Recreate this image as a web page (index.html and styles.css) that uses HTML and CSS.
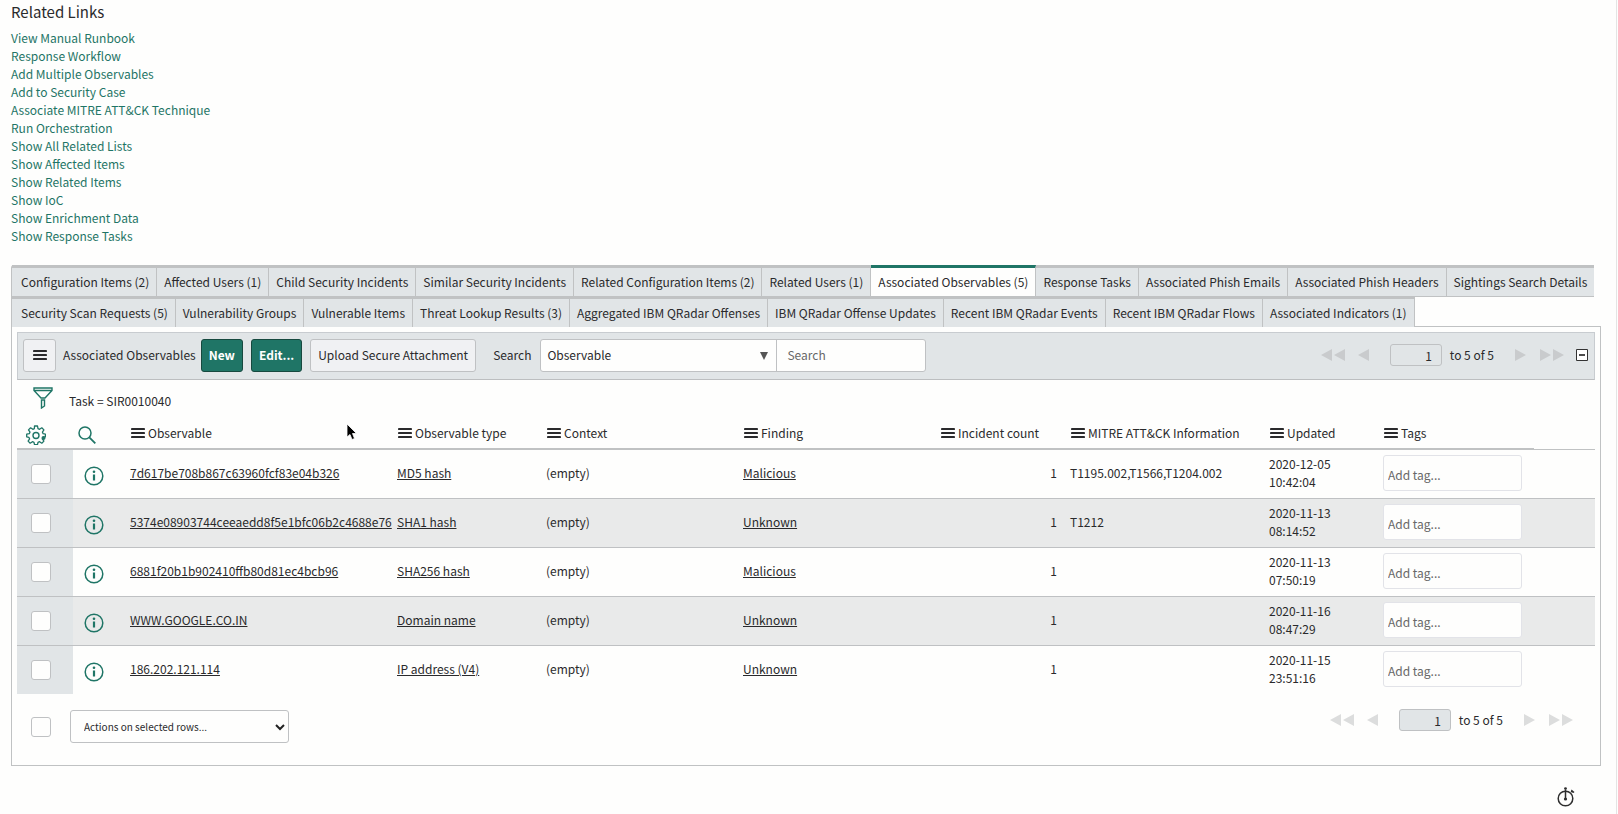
FILE: index.html
```html
<!DOCTYPE html>
<html lang="en">
<head>
<meta charset="utf-8">
<title>Security Incident</title>
<link rel="stylesheet" href="styles.css">
</head>

<body>
<svg class="defs" aria-hidden="true">
	<symbol id="menu" viewBox="0 0 14 12"><path d="M1 2h12M1 6h12M1 10h12" fill="none" stroke="currentColor" stroke-width="2.200" stroke-linecap="round"/></symbol>
	<symbol id="info" viewBox="0 0 20 20"><circle cx="10" cy="10" r="8.8" fill="none" stroke="currentColor" stroke-width="1.5"/><path d="M10 8.500v6" stroke="currentColor" stroke-width="2.200"/><circle cx="10" cy="5.800" r="1.300" fill="currentColor"/></symbol>
	<symbol id="first" viewBox="0 0 24 12"><path d="M11 0v12L0 6zM24 0v12L13 6z" fill="currentColor"/></symbol>
	<symbol id="prev" viewBox="0 0 12 12"><path d="M11 0v12L0 6z" fill="currentColor"/></symbol>
	<symbol id="next" viewBox="0 0 12 12"><path d="M0 0v12L11 6z" fill="currentColor"/></symbol>
	<symbol id="last" viewBox="0 0 24 12"><path d="M0 0v12l11-6zM13 0v12l11-6z" fill="currentColor"/></symbol>
</svg>

<div class="page">
	<h2>Related Links</h2>
	<ul class="links">
		<li><a href="#">View Manual Runbook</a></li>
		<li><a href="#">Response Workflow</a></li>
		<li><a href="#">Add Multiple Observables</a></li>
		<li><a href="#">Add to Security Case</a></li>
		<li><a href="#">Associate MITRE ATT&amp;CK Technique</a></li>
		<li><a href="#">Run Orchestration</a></li>
		<li><a href="#">Show All Related Lists</a></li>
		<li><a href="#">Show Affected Items</a></li>
		<li><a href="#">Show Related Items</a></li>
		<li><a href="#">Show IoC</a></li>
		<li><a href="#">Show Enrichment Data</a></li>
		<li><a href="#">Show Response Tasks</a></li>
	</ul>

	<div class="tabs">
		<div class="tab-row upper">
			<button class="tab">Configuration Items (2)</button>
			<button class="tab">Affected Users (1)</button>
			<button class="tab">Child Security Incidents</button>
			<button class="tab">Similar Security Incidents</button>
			<button class="tab">Related Configuration Items (2)</button>
			<button class="tab">Related Users (1)</button>
			<button class="tab active">Associated Observables (5)</button>
			<button class="tab">Response Tasks</button>
			<button class="tab">Associated Phish Emails</button>
			<button class="tab">Associated Phish Headers</button>
			<button class="tab">Sightings Search Details</button>
		</div>
		<div class="tab-row">
			<button class="tab">Security Scan Requests (5)</button>
			<button class="tab">Vulnerability Groups</button>
			<button class="tab">Vulnerable Items</button>
			<button class="tab">Threat Lookup Results (3)</button>
			<button class="tab">Aggregated IBM QRadar Offenses</button>
			<button class="tab">IBM QRadar Offense Updates</button>
			<button class="tab">Recent IBM QRadar Events</button>
			<button class="tab">Recent IBM QRadar Flows</button>
			<button class="tab">Associated Indicators (1)</button>
		</div>
	</div>

	<div class="panel">
		<div class="toolbar">
			<button class="btn square" aria-label="List menu"><svg class="bars"><use href="#menu"/></svg></button>
			<span class="list-title">Associated Observables</span>
			<button class="btn primary">New</button>
			<button class="btn primary">Edit...</button>
			<button class="btn">Upload Secure Attachment</button>
			<label class="search-label" for="searchField">Search</label>
			<div class="search-group">
				<div class="select-wrap">
					<select id="searchField"><option>Observable</option></select>
					<svg class="caret" viewBox="0 0 8 8"><path d="M0 0h8L4 8z" fill="#555"/></svg>
				</div>
				<input id="searchText" type="text" placeholder="Search" aria-label="Search text">
			</div>
			<div class="pager">
				<button aria-label="First page"><svg class="double"><use href="#first"/></svg></button>
				<button aria-label="Previous page"><svg class="single"><use href="#prev"/></svg></button>
				<input type="text" value="1" aria-label="Row">
				<span>to 5 of 5</span>
				<button aria-label="Next page"><svg class="single"><use href="#next"/></svg></button>
				<button aria-label="Last page"><svg class="double"><use href="#last"/></svg></button>
			</div>
			<button class="collapse" aria-label="Collapse list"><svg viewBox="0 0 12 12"><path d="M.5.5h11v11H.5z" fill="#fff" stroke="#333"/><path d="M3 6h6" stroke="#111" stroke-width="1.5"/></svg></button>
		</div>

		<div class="filter">
			<button class="icon" aria-label="Filter"><svg class="funnel" viewBox="0 0 20 22"><path d="M1 1h18v2.500l-7 7.500H8L1 3.500zM1 3.500h18M8.500 13h3v6l-3 2z" fill="none" stroke="currentColor" stroke-width="1.400"/></svg></button>
			<a class="crumb" href="#">Task = SIR0010040</a>
		</div>

		<table>
			<colgroup>
				<col class="c-check"><col class="c-info"><col class="c-obs"><col class="c-type"><col class="c-context"><col class="c-finding"><col class="c-count"><col class="c-mitre"><col class="c-updated"><col class="c-tags"><col>
			</colgroup>
			<thead>
				<tr>
					<th class="gear-cell"><button class="icon" aria-label="Personalize list"><svg class="gear" viewBox="0 0 20 20"><path d="M8.500 1h3l.5 2.600 1.600.7 2.200-1.500 2.100 2.100-1.500 2.200.7 1.600 2.300.5v2.600l-2.300.5-.7 1.600 1.500 2.200-2.100 2.100-2.200-1.500-1.600.7-.5 2.300h-3l-.5-2.300-1.600-.7-2.200 1.500-2.100-2.100 1.500-2.200-.7-1.600L.7 11.800V9.200l2.600-.5.7-1.600-1.500-2.200 2.100-2.100 2.200 1.500 1.600-.7z" fill="none" stroke="currentColor" stroke-width="1.300" stroke-linejoin="round"/><circle cx="10" cy="10.500" r="3" fill="none" stroke="currentColor" stroke-width="1.400"/><circle cx="17.500" cy="13" r="2" fill="currentColor"/></svg></button></th>
					<th class="find-cell"><button class="icon" aria-label="Search columns"><svg class="find" viewBox="0 0 18 18"><circle cx="7" cy="7" r="6" fill="none" stroke="currentColor" stroke-width="1.500"/><path d="M11.300 11.300l6 6" stroke="currentColor" stroke-width="1.800"/></svg></button></th>
					<th><svg class="bars"><use href="#menu"/></svg>Observable</th>
					<th><svg class="bars"><use href="#menu"/></svg>Observable type</th>
					<th><svg class="bars"><use href="#menu"/></svg>Context</th>
					<th><svg class="bars"><use href="#menu"/></svg>Finding</th>
					<th><svg class="bars"><use href="#menu"/></svg>Incident count</th>
					<th><svg class="bars"><use href="#menu"/></svg>MITRE ATT&amp;CK Information</th>
					<th><svg class="bars"><use href="#menu"/></svg>Updated</th>
					<th><svg class="bars"><use href="#menu"/></svg>Tags</th>
					<th class="spare"></th>
				</tr>
			</thead>
			<tbody>
				<tr>
					<td class="check"><input type="checkbox" aria-label="Select row 1"></td>
					<td class="details"><button class="icon" aria-label="Preview row 1"><svg><use href="#info"/></svg></button></td>
					<td><a href="#">7d617be708b867c63960fcf83e04b326</a></td>
					<td><a href="#">MD5 hash</a></td>
					<td>(empty)</td>
					<td><a href="#">Malicious</a></td>
					<td class="num">1</td>
					<td>T1195.002,T1566,T1204.002</td>
					<td class="date">2020-12-05 10:42:04</td>
					<td><input class="tag" type="text" placeholder="Add tag..." aria-label="Tags for row 1"></td>
					<td></td>
				</tr>
				<tr>
					<td class="check"><input type="checkbox" aria-label="Select row 2"></td>
					<td class="details"><button class="icon" aria-label="Preview row 2"><svg><use href="#info"/></svg></button></td>
					<td><a href="#">5374e08903744ceeaedd8f5e1bfc06b2c4688e76</a></td>
					<td><a href="#">SHA1 hash</a></td>
					<td>(empty)</td>
					<td><a href="#">Unknown</a></td>
					<td class="num">1</td>
					<td>T1212</td>
					<td class="date">2020-11-13 08:14:52</td>
					<td><input class="tag" type="text" placeholder="Add tag..." aria-label="Tags for row 2"></td>
					<td></td>
				</tr>
				<tr>
					<td class="check"><input type="checkbox" aria-label="Select row 3"></td>
					<td class="details"><button class="icon" aria-label="Preview row 3"><svg><use href="#info"/></svg></button></td>
					<td><a href="#">6881f20b1b902410ffb80d81ec4bcb96</a></td>
					<td><a href="#">SHA256 hash</a></td>
					<td>(empty)</td>
					<td><a href="#">Malicious</a></td>
					<td class="num">1</td>
					<td></td>
					<td class="date">2020-11-13 07:50:19</td>
					<td><input class="tag" type="text" placeholder="Add tag..." aria-label="Tags for row 3"></td>
					<td></td>
				</tr>
				<tr>
					<td class="check"><input type="checkbox" aria-label="Select row 4"></td>
					<td class="details"><button class="icon" aria-label="Preview row 4"><svg><use href="#info"/></svg></button></td>
					<td><a href="#">WWW.GOOGLE.CO.IN</a></td>
					<td><a href="#">Domain name</a></td>
					<td>(empty)</td>
					<td><a href="#">Unknown</a></td>
					<td class="num">1</td>
					<td></td>
					<td class="date">2020-11-16 08:47:29</td>
					<td><input class="tag" type="text" placeholder="Add tag..." aria-label="Tags for row 4"></td>
					<td></td>
				</tr>
				<tr>
					<td class="check"><input type="checkbox" aria-label="Select row 5"></td>
					<td class="details"><button class="icon" aria-label="Preview row 5"><svg><use href="#info"/></svg></button></td>
					<td><a href="#">186.202.121.114</a></td>
					<td><a href="#">IP address (V4)</a></td>
					<td>(empty)</td>
					<td><a href="#">Unknown</a></td>
					<td class="num">1</td>
					<td></td>
					<td class="date">2020-11-15 23:51:16</td>
					<td><input class="tag" type="text" placeholder="Add tag..." aria-label="Tags for row 5"></td>
					<td></td>
				</tr>
			</tbody>
		</table>

		<div class="list-footer">
			<input type="checkbox" aria-label="Select all rows">
			<div class="select-wrap actions">
				<select aria-label="Actions on selected rows"><option>Actions on selected rows...</option></select>
				<svg class="caret" viewBox="0 0 10 6"><path d="M1 1l4 4 4-4" fill="none" stroke="#222" stroke-width="2"/></svg>
			</div>
			<div class="pager">
				<button aria-label="First page"><svg class="double"><use href="#first"/></svg></button>
				<button aria-label="Previous page"><svg class="single"><use href="#prev"/></svg></button>
				<input type="text" value="1" aria-label="Row">
				<span>to 5 of 5</span>
				<button aria-label="Next page"><svg class="single"><use href="#next"/></svg></button>
				<button aria-label="Last page"><svg class="double"><use href="#last"/></svg></button>
			</div>
		</div>
	</div>

	<div class="timing">
		<button class="icon" aria-label="Response time"><svg viewBox="0 0 18 20"><circle cx="8.500" cy="11.500" r="7.300" fill="none" stroke="currentColor" stroke-width="1.500"/><path d="M8.500 3v10" stroke="currentColor" stroke-width="1.500"/><circle cx="8.500" cy="1.600" r="1.400" fill="currentColor"/><circle cx="8.500" cy="12" r="1.600" fill="currentColor"/><path d="M14.500 2.500l3 2.500-1 1-2.800-1z" fill="currentColor"/></svg></button>
	</div>
</div>

<svg class="pointer" viewBox="0 0 12 18"><path d="M1 1v13l3-2.500 2 5 2.500-1-2-5h4z" fill="#000" stroke="#fff" stroke-width=".8"/></svg>
</body>
</html>
```
FILE: styles.css
```css
* {
	box-sizing:border-box;
}

body {
	margin:0;
	background:#fefefd;
	color:#2a2a2c;
	font-family:"Noto Sans CJK SC", "Noto Sans", sans-serif;
	font-size:12px;
	line-height:18px;
}

button, input, select {
	font:inherit;
	color:inherit;
	margin:0;
}

button {
	background:none;
	border:0;
	padding:0;
}

svg {
	display:block;
}

.defs {
	display:none;
}

.page {
	min-height:100vh;
	margin-right:1px;
	padding:0 15px 0 11px;
	border-right:1px solid #e4e4e4;
}

h2 {
	margin:0;
	font-size:15px;
	line-height:24px;
	font-weight:normal;
}

.links {
	list-style:none;
	margin:0;
	padding:5px 0 20px;
}

.links a {
	color:#1f7566;
	text-decoration:none;
}

/* tabs */

.tabs {
	position:relative;
	margin-bottom:-1px;
}

.tab-row {
	display:flex;
	width:max-content;
	border-left:1px solid #c0c2c3;
}

.upper {
	margin-bottom:-1px;
	border-bottom:1px solid #c0c2c3;
	border-top-left-radius:3px;
}

.tab {
	height:31px;
	padding:0 7px;
	background:#e1e5e7;
	border-top:3px solid #c0c2c3;
	border-right:1px solid #c0c2c3;
	white-space:nowrap;
}

.tab:first-child {
	padding-left:9px;
}

.upper .tab:last-child {
	border-right:0;
}

.tab.active {
	background:#fefefd;
	border-top-color:#1f7566;
}

/* list */

.panel {
	border:1px solid #c0c2c3;
	padding:5px;
}

.toolbar {
	display:flex;
	align-items:center;
	height:48px;
	padding:0 6px 2px 5px;
	background:#e1e5e7;
	border:1px solid #c8ccd0;
	border-bottom-color:#bcbec0;
}

.btn {
	height:33px;
	margin-right:8px;
	padding:0 7px;
	background:#f0f1f3;
	border:1px solid #bfc1c3;
	border-radius:3px;
	white-space:nowrap;
}

.square {
	width:33px;
	margin-right:7px;
	padding:0 9px;
}

.bars {
	width:14px;
	height:12px;
}

.primary {
	background:#1f7566;
	border-color:#17493f;
	color:#fff;
	font-weight:bold;
}

.list-title {
	margin-right:5px;
	white-space:nowrap;
}

.search-label {
	margin:0 9px;
}

.search-group {
	display:flex;
	height:33px;
	background:#fefefd;
	border:1px solid #bfc1c3;
	border-radius:3px;
}

.search-group .select-wrap {
	width:236px;
	border-right:1px solid #bfc1c3;
}

.search-group input {
	width:148px;
	padding:0 10px;
	background:none;
	border:0;
}

.select-wrap {
	position:relative;
}

.select-wrap select {
	width:100%;
	height:100%;
	padding:0 6px;
	appearance:none;
	background:none;
	border:0;
}

.caret {
	position:absolute;
	top:12px;
	right:8px;
	width:8px;
	height:8px;
}

::placeholder {
	color:#686868;
	opacity:1;
}

.pager {
	display:flex;
	align-items:center;
	gap:13px;
	margin-left:auto;
	white-space:nowrap;
}

.pager svg {
	color:#c9cbcd;
}

.double {
	width:24px;
	height:12px;
}

.single {
	width:12px;
	height:12px;
}

.pager input {
	width:52px;
	height:22px;
	margin:0 -5px 0 7px;
	padding:0 9px;
	background:#e1e5e7;
	border:1px solid #bfc1c3;
	border-radius:3px;
	text-align:right;
}

.pager span {
	margin-right:8px;
}

.collapse {
	margin-left:12px;
}

.collapse svg {
	width:12px;
	height:12px;
}

.icon {
	color:#1f7566;
}

.filter {
	display:flex;
	align-items:center;
	gap:16px;
	height:36px;
	padding:0 16px;
}

.funnel {
	width:20px;
	height:22px;
}

.crumb {
	color:inherit;
	text-decoration:none;
	padding-top:5px;
}

table {
	width:100%;
	table-layout:fixed;
	border-collapse:separate;
	border-spacing:0;
}

.c-check { width:56px; }
.c-info { width:52px; }
.c-obs { width:267px; }
.c-type { width:149px; }
.c-context { width:197px; }
.c-finding { width:197px; }
.c-count { width:130px; }
.c-mitre { width:199px; }
.c-updated { width:114px; }
.c-tags { width:156px; }

th {
	height:34px;
	padding:1px 5px 0;
	border-bottom:2px solid #c0c2c3;
	font-weight:normal;
	text-align:left;
	white-space:nowrap;
}

th .bars {
	display:inline-block;
	margin:0 3px 0 1px;
	vertical-align:-1px;
}

.spare {
	border-bottom:1px solid #c0c2c3;
}

th .icon {
	display:block;
	margin-top:4px;
}

.gear-cell {
	padding-left:9px;
}

.gear {
	width:20px;
	height:20px;
}

.find {
	width:18px;
	height:18px;
}

td {
	height:49px;
	padding:0 5px 2px;
	border-bottom:1px solid #bfc1c3;
}

td a {
	color:inherit;
}

tbody tr:nth-child(even) {
	background:#e9eaea;
}

tbody tr:last-child td {
	height:48px;
	border-bottom:0;
}

.check {
	padding:0 14px;
	background:#e1e5e7;
}

input[type="checkbox"] {
	display:block;
	width:20px;
	height:20px;
	appearance:none;
	background:#fefefd;
	border:1px solid #bfc1c3;
	border-radius:3px;
}

.details {
	padding:3px 11px 0;
}

.details .icon {
	display:block;
}

.details svg {
	width:20px;
	height:20px;
}

.num {
	padding-right:8px;
	text-align:right;
}

.date {
	padding-right:40px;
}

.tag {
	display:block;
	width:139px;
	height:36px;
	padding:2px 4px 0;
	background:#fefefd;
	border:1px solid #e2e3e8;
	border-radius:3px;
}

.list-footer {
	display:flex;
	height:66px;
	padding:16px 22px 0 14px;
}

.list-footer input[type="checkbox"] {
	margin-top:7px;
}

.actions {
	width:219px;
	height:33px;
	margin-left:19px;
	border:1px solid #bfc1c3;
	border-radius:3px;
}

.actions select {
	padding:0 13px;
	font-size:10px;
}

.actions .caret {
	right:3px;
	width:10px;
}

.list-footer .pager {
	height:20px;
}

.list-footer .pager svg {
	color:#dcdddd;
}

.timing {
	display:flex;
	justify-content:flex-end;
	padding:21px 26px 0 0;
}

.timing svg {
	width:18px;
	height:20px;
	color:#2e2e2e;
}

.pointer {
	position:absolute;
	left:346px;
	top:423px;
	width:12px;
	height:18px;
}
```
